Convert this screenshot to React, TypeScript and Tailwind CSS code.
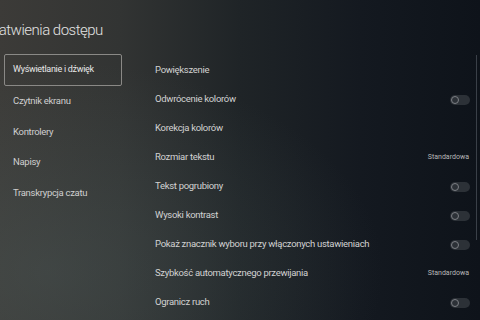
import React from "react";

type Row = { label: string; kind: "none" | "toggle" | "value"; value?: string };

const menu = [
  "Wyświetlanie i dźwięk",
  "Czytnik ekranu",
  "Kontrolery",
  "Napisy",
  "Transkrypcja czatu",
];

const rows: Row[] = [
  { label: "Powiększenie", kind: "none" },
  { label: "Odwrócenie kolorów", kind: "toggle" },
  { label: "Korekcja kolorów", kind: "none" },
  { label: "Rozmiar tekstu", kind: "value", value: "Standardowa" },
  { label: "Tekst pogrubiony", kind: "toggle" },
  { label: "Wysoki kontrast", kind: "toggle" },
  { label: "Pokaż znacznik wyboru przy włączonych ustawieniach", kind: "toggle" },
  { label: "Szybkość automatycznego przewijania", kind: "value", value: "Standardowa" },
  { label: "Ogranicz ruch", kind: "toggle" },
];

function Toggle() {
  return (
    <div className="flex h-[10px] w-[20px] items-center rounded-full bg-[#2c3137] px-[1px]">
      <div className="h-[8px] w-[8px] rounded-full border border-[#7d8085] bg-[#2c3137]" />
    </div>
  );
}

export default function App() {
  return (
    <div
      className="relative h-[320px] w-[480px] overflow-hidden bg-[linear-gradient(90deg,#3c3b38_0%,#323433_25%,#1f2427_50%,#141920_75%,#0e131a_100%)] text-[#d2d2d2]"
      style={{ fontFamily: 'Roboto, "Noto Sans", sans-serif' }}
    >
      <div className="pointer-events-none absolute inset-0 bg-[radial-gradient(ellipse_at_10%_85%,rgba(80,95,95,0.35),transparent_55%)]" />
      <div className="relative flex h-full flex-col">
        <h1 className="ml-[-14px] mt-[18px] h-[30px] text-[15px] font-light leading-[24px] tracking-[-0.5px] text-[#e2e2e2]">
          Ułatwienia dostępu
        </h1>
        <div className="mt-[6px] flex flex-1">
          <div className="flex w-[130px] flex-col pl-[4px] tracking-[-0.3px]">
            {menu.map((m, i) => (
              <div
                key={m}
                className={
                  i === 0
                    ? "flex h-[32px] w-[118px] items-center rounded-[2px] border border-[#8a8986] pl-[8px] text-[9px] text-[#e8e8e8]"
                    : "flex h-[30.5px] items-center pl-[9px] text-[9.5px] text-[#cfcfcf]"
                }
              >
                {m}
              </div>
            ))}
          </div>
          <div className="flex flex-1 flex-col pl-[25px] pr-[10px] pt-[2px]">
            {rows.map((r) => (
              <div
                key={r.label}
                className="flex h-[29px] shrink-0 items-center justify-between text-[9.5px] tracking-[-0.3px]"
              >
                <span>{r.label}</span>
                {r.kind === "toggle" && <Toggle />}
                {r.kind === "value" && (
                  <span className="pr-[1px] text-[7px] tracking-normal text-[#b8b8b8]">{r.value}</span>
                )}
              </div>
            ))}
          </div>
        </div>
      </div>
      <div className="absolute right-[3px] top-[55px] h-[185px] w-[1px] bg-[#3a4048]" />
    </div>
  );
}
